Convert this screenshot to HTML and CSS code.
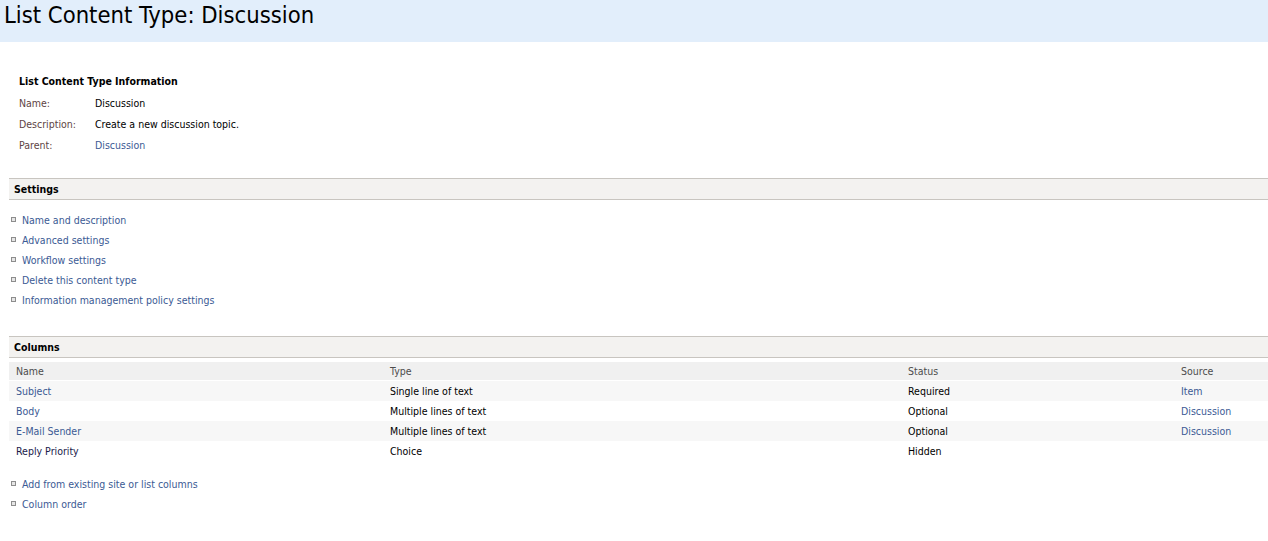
FILE: index.html
```html
<!DOCTYPE html>
<html>
<head>
<meta charset="utf-8">
<link rel="stylesheet" href="styles.css">
</head>
<body>
<div class="titlebar"><h1 class="title">List Content Type: Discussion</h1></div>

<div class="info">
  <div class="info-head">List Content Type Information</div>
  <div class="info-grid">
    <div class="lbl">Name:</div><div class="val">Discussion</div>
    <div class="lbl">Description:</div><div class="val">Create a new discussion topic.</div>
    <div class="lbl">Parent:</div><div class="val"><a href="#">Discussion</a></div>
  </div>
</div>

<div class="section settings">
  <div class="sec-bar">Settings</div>
  <ul class="links">
    <li><a href="#">Name and description</a></li>
    <li><a href="#">Advanced settings</a></li>
    <li><a href="#">Workflow settings</a></li>
    <li><a href="#">Delete this content type</a></li>
    <li><a href="#">Information management policy settings</a></li>
  </ul>
</div>

<div class="section columns">
  <div class="sec-bar">Columns</div>
  <div class="table">
    <div class="row head"><div>Name</div><div>Type</div><div>Status</div><div>Source</div></div>
    <div class="row alt"><div><a href="#">Subject</a></div><div>Single line of text</div><div>Required</div><div><a href="#">Item</a></div></div>
    <div class="row"><div><a href="#">Body</a></div><div>Multiple lines of text</div><div>Optional</div><div><a href="#">Discussion</a></div></div>
    <div class="row alt"><div><a href="#">E-Mail Sender</a></div><div>Multiple lines of text</div><div>Optional</div><div><a href="#">Discussion</a></div></div>
    <div class="row"><div class="plain">Reply Priority</div><div>Choice</div><div>Hidden</div><div></div></div>
  </div>
  <ul class="links bottom">
    <li><a href="#">Add from existing site or list columns</a></li>
    <li><a href="#">Column order</a></li>
  </ul>
</div>
</body>
</html>
```
FILE: styles.css
```css
html, body { margin: 0; padding: 0; background: #fff; }
body {
  font-family: "DejaVu Sans Condensed", "DejaVu Sans", sans-serif;
  font-size: 10.5px;
  color: #000;
  width: 1268px;
  overflow: hidden;
}
a { color: #3b5a94; text-decoration: none; }

.titlebar {
  background: #e2eefb;
  height: 42px;
  padding-left: 4px;
  box-sizing: border-box;
}
.title {
  margin: 0;
  font-family: "DejaVu Sans Condensed", "DejaVu Sans", sans-serif;
  font-weight: normal;
  font-size: 23.6px;
  line-height: 30px;
  color: #000;
}

.info { padding: 31px 0 0 19px; }
.info-head { font-weight: bold; line-height: 16px; }
.info-grid {
  display: grid;
  grid-template-columns: 76px auto;
  grid-auto-rows: 21px;
  margin-top: 4px;
  line-height: 21px;
}
.lbl { color: #5e4444; }

.section { padding-left: 9px; }
.settings { margin-top: 22px; }
.sec-bar {
  height: 20px;
  line-height: 20px;
  background: #f3f2f0;
  border-top: 1px solid #c8c5c0;
  border-bottom: 1px solid #c8c5c0;
  padding-left: 5px;
  font-weight: bold;
}
.links {
  list-style: none;
  margin: 0;
  padding: 10px 0 0 2px;
}
.links li {
  display: flex;
  align-items: center;
  height: 20px;
  gap: 6px;
}
.links li::before {
  content: "";
  width: 3px;
  height: 3px;
  border: 1px solid #8d8d8d;
  background: #e6e6e6;
  flex: none;
  margin-top: -2px;
}
.columns { margin-top: 26px; }
.table { margin-top: 4px; }
.row {
  display: grid;
  grid-template-columns: 374px 518px 273px auto;
  height: 20px;
  line-height: 20px;
  padding-left: 7px;
}
.row.head { background: #f0f0f0; color: #4c4c4c; height: 18px; line-height: 18px; margin-bottom: 1px; }
.row.alt { background: #f7f7f7; }
.plain { color: #1a1a4a; }
.links.bottom { padding-top: 13px; }
```
